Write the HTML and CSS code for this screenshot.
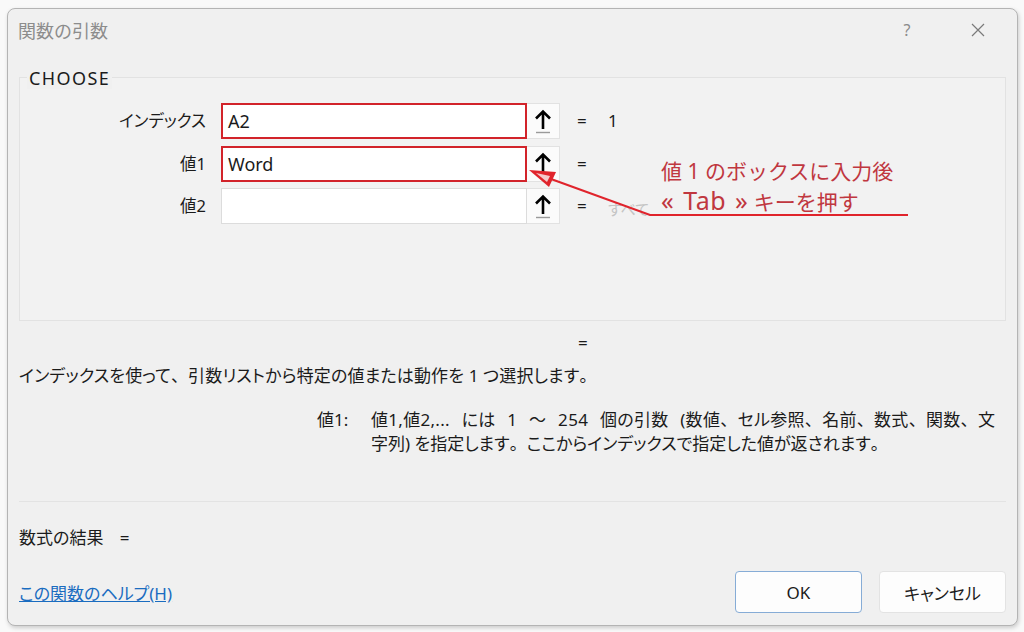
FILE: index.html
```html
<!DOCTYPE html>
<html lang="ja">
<head>
<meta charset="utf-8">
<title>関数の引数</title>
<link rel="stylesheet" href="styles.css">
</head>
<body>
<div class="page">
  <div class="dialog">
    <div class="titlebar">
      <span class="title">関数の引数</span>
      <span class="tb-help">?</span>
      <span class="tb-close">
        <svg width="14" height="14" viewBox="0 0 14 14"><path d="M1 1 L13 13 M13 1 L1 13" stroke="#7a7a7a" stroke-width="1.2" fill="none"/></svg>
      </span>
    </div>
    <div class="content">
      <div class="group">
        <span class="legend">CHOOSE</span>
        <div class="rows">
          <div class="label">インデックス</div>
          <div class="input active">A2</div>
          <div class="pick"><svg width="20" height="26" viewBox="0 0 20 26"><path d="M10 3.5 L10 21 M3 10.5 L10 3.5 L17 10.5" stroke="#000" stroke-width="2.6" fill="none"/><path d="M3 24.5 H17" stroke="#9a9a9a" stroke-width="1.4"/></svg></div>
          <div class="eq">=</div>
          <div class="val">1</div>

          <div class="label">値1</div>
          <div class="input active">Word</div>
          <div class="pick"><svg width="20" height="26" viewBox="0 0 20 26"><path d="M10 3.5 L10 21 M3 10.5 L10 3.5 L17 10.5" stroke="#000" stroke-width="2.6" fill="none"/></svg></div>
          <div class="eq">=</div>
          <div class="val"></div>

          <div class="label">値2</div>
          <div class="input"></div>
          <div class="pick"><svg width="20" height="26" viewBox="0 0 20 26"><path d="M10 3.5 L10 21 M3 10.5 L10 3.5 L17 10.5" stroke="#000" stroke-width="2.6" fill="none"/><path d="M3 24.5 H17" stroke="#9a9a9a" stroke-width="1.4"/></svg></div>
          <div class="eq">=</div>
          <div class="val faded">すべて</div>
        </div>
      </div>
      <div class="result-eq">=</div>
      <p class="desc">インデックスを使って<span class="fw">、</span>引数リストから特定の値または動作を 1 つ選択します<span class="fw">。</span></p>
      <div class="argdesc">
        <span class="argname">値1:</span>
        <span class="argtext"><span class="l1">値1,値2,... には 1 ～ 254 個の引数 (数値<span class="fw">、</span>セル参照<span class="fw">、</span>名前<span class="fw">、</span>数式<span class="fw">、</span>関数<span class="fw">、</span>文</span><br>字列) を指定します<span class="fw">。</span>ここからインデックスで指定した値が返されます<span class="fw">。</span></span>
      </div>
      <div class="sep"></div>
      <div class="formula">数式の結果 =</div>
      <div class="footer">
        <a class="help" href="#">この関数のヘルプ(H)</a>
        <div class="buttons">
          <button class="btn ok">OK</button>
          <button class="btn">キャンセル</button>
        </div>
      </div>
    </div>
  </div>

  <div class="note">値 1 のボックスに入力後<br><span class="lat">« Tab »</span> キーを押す</div>
  <svg class="arrow" width="1024" height="632" viewBox="0 0 1024 632">
    <path d="M540 175 L650 215 L908 215" stroke="#e0242c" stroke-width="2.2" fill="none"/>
    <path d="M529 170 L556 172 L549 187 Z" fill="#e0242c"/>
    <path d="M536 173 L550 176 L547 182 Z" fill="#f3c9cb"/>
  </svg>
</div>
</body>
</html>
```

FILE: styles.css
```css
* { box-sizing: border-box; }
html, body { margin: 0; padding: 0; }
body {
  background: #f9f9f9;
  font-family: "Noto Sans", "Noto Sans CJK JP", sans-serif;
  color: #1b1b1b;
  font-feature-settings: "palt";
}
.fw {
  font-feature-settings: normal;
}
.page {
  position: relative;
  width: 1024px;
  height: 632px;
  padding: 8px 0 0 7px;
}
.dialog {
  width: 1011px;
  height: 618px;
  background: #f0f0f0;
  border: 1px solid #b4b4b4;
  border-radius: 8px;
  box-shadow: 1px 2px 4px rgba(0,0,0,0.18);
  display: flex;
  flex-direction: column;
}
.titlebar {
  height: 41px;
  display: flex;
  align-items: center;
  padding-left: 10px;
}
.title {
  font-size: 18px;
  font-feature-settings: normal;
  color: #8c8c8c;
  flex: 1;
}
.tb-help {
  font-size: 16px;
  color: #8a8a8a;
  width: 20px;
  text-align: center;
  margin-right: 51px;
}
.tb-close {
  width: 20px;
  display: flex;
  justify-content: center;
  margin-right: 29px;
}
.content {
  padding: 0 11px;
  display: flex;
  flex-direction: column;
}
.group {
  margin-top: 27px;
  height: 244px;
  border: 1px solid #e2e2e2;
  background: #f2f2f2;
  display: flex;
  flex-direction: column;
  align-items: flex-start;
}
.legend {
  display: inline-block;
  margin-top: -11px;
  margin-left: 7px;
  padding: 0 2px;
  line-height: 22px;
  font-size: 18px;
  letter-spacing: 1.4px;
  background: #f0f0f0;
}
.rows {
  margin-top: 14px;
  display: grid;
  grid-template-columns: 201px 306px 33px 48px 80px;
  grid-auto-rows: 36px;
  row-gap: 6.5px;
}
.label {
  text-align: right;
  font-size: 16.5px;
  line-height: 36px;
  padding-right: 15px;
}
.input {
  background: #ffffff;
  border: 1px solid #dcdcdc;
  font-size: 18px;
  line-height: 32px;
  padding-left: 6px;
}
.input.active {
  border: 2px solid #d2232a;
  padding-left: 5px;
}
.pick {
  background: #fbfbfb;
  border: 1px solid #e2e2e2;
  border-left: none;
  display: flex;
  align-items: center;
  justify-content: center;
}
.eq {
  font-size: 17px;
  line-height: 36px;
  padding-left: 17px;
}
.val {
  font-size: 17px;
  line-height: 36px;
}
.val.faded {
  color: #c4c4c4;
  font-size: 15px;
  line-height: 42px;
}
.result-eq {
  margin-top: 11px;
  margin-left: 559px;
  font-size: 17px;
  line-height: 22px;
}
.desc {
  margin: 11px 0 0 0;
  font-size: 17px;
  line-height: 22px;
  letter-spacing: 0.15px;
}
.argdesc {
  margin-top: 21px;
  display: flex;
  padding-left: 298px;
  font-size: 17px;
  line-height: 24px;
}
.argname {
  width: 54px;
  flex: none;
}
.argtext {
  width: 660px;
  white-space: nowrap;
}
.argtext .l1 {
  word-spacing: 7px;
  letter-spacing: 0.3px;
}
.sep {
  margin-top: 45px;
  height: 1px;
  background: #e3e3e3;
}
.formula {
  margin-top: 24px;
  font-size: 17px;
  line-height: 24px;
  word-spacing: 12px;
}
.footer {
  margin-top: 21px;
  display: flex;
  align-items: center;
  justify-content: space-between;
}
.help {
  font-size: 17px;
  color: #1a6cc0;
  text-decoration: underline;
}
.buttons {
  display: flex;
  gap: 17px;
}
.btn {
  width: 127px;
  height: 42px;
  background: #fdfdfd;
  border: 1px solid #e3e3e3;
  border-radius: 4px;
  font-family: "Noto Sans", "Noto Sans CJK JP", sans-serif;
  font-feature-settings: "palt";
  font-size: 17px;
  color: #1b1b1b;
}
.btn.ok {
  border-color: #86acd6;
}
.note {
  position: absolute;
  left: 661px;
  top: 157px;
  font-size: 21px;
  line-height: 29px;
  color: #c0373f;
  font-feature-settings: normal;
}
.note .lat {
  font-size: 25px;
  word-spacing: 2px;
  letter-spacing: 0.5px;
}
.arrow {
  position: absolute;
  left: 0;
  top: 0;
  pointer-events: none;
}
```
